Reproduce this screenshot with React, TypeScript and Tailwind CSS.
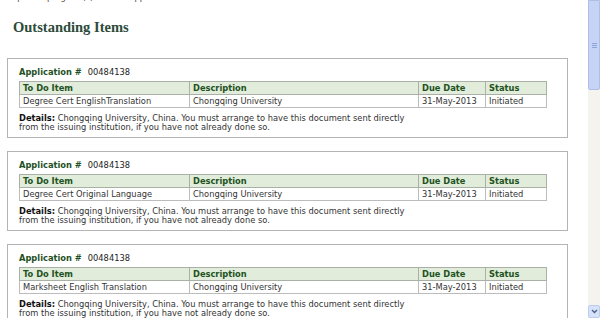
import React from "react";

type Item = { todo: string; description: string; due: string; status: string };

const items: Item[] = [
  { todo: "Degree Cert EnglishTranslation", description: "Chongqing University", due: "31-May-2013", status: "Initiated" },
  { todo: "Degree Cert Original Language", description: "Chongqing University", due: "31-May-2013", status: "Initiated" },
  { todo: "Marksheet English Translation", description: "Chongqing University", due: "31-May-2013", status: "Initiated" },
];

const verdana = "font-['DejaVu_Sans',Verdana,sans-serif]";

function ItemBox({ item }: { item: Item }) {
  return (
    <div className="mt-[13px] ml-[7px] w-[561px] border border-[#b4b4b4] bg-white pt-[7px] pb-[5px] pl-[11px]">
      <div className="flex h-[12px] items-center text-[8.3px] leading-[12px]">
        <span className="font-bold text-[#1f4f1f]">Application #</span>
        <span className="ml-[6px] text-[#222]">00484138</span>
      </div>
      <table className="mt-[3px] w-[528px] border-collapse text-[8.3px] leading-[12px]">
        <thead>
          <tr className="bg-[#e1ecdb]">
            <th className="w-[170px] border border-[#a9b0a6] px-[3px] text-left font-bold text-[#225222]">To Do Item</th>
            <th className="w-[229px] border border-[#a9b0a6] px-[3px] text-left font-bold text-[#225222]">Description</th>
            <th className="w-[67px] border border-[#a9b0a6] px-[3px] text-left font-bold text-[#225222]">Due Date</th>
            <th className="border border-[#a9b0a6] px-[3px] text-left font-bold text-[#225222]">Status</th>
          </tr>
        </thead>
        <tbody>
          <tr>
            <td className="border border-[#bcbcbc] px-[3px] text-[#333]">{item.todo}</td>
            <td className="border border-[#bcbcbc] px-[3px] text-[#333]">{item.description}</td>
            <td className="border border-[#bcbcbc] px-[3px] text-[#333]">{item.due}</td>
            <td className="border border-[#bcbcbc] px-[3px] text-[#333]">{item.status}</td>
          </tr>
        </tbody>
      </table>
      <p className="mt-[6px] text-[8.3px] leading-[9px] text-[#333]">
        <span className="font-bold text-[#111]">Details:</span> Chongqing University, China. You must arrange to have this document sent directly
        <br />
        from the issuing institution, if you have not already done so.
      </p>
    </div>
  );
}

function Scrollbar() {
  return (
    <div className="flex h-full w-[12px] flex-col bg-[#f5f3ed]">
      <div className="flex h-[90px] items-center justify-center rounded-b-[2px] border border-[#aebfe6] bg-[#c5d3f6]">
        <div className="flex flex-col gap-[1px]">
          <div className="h-[1px] w-[5px] bg-[#8ea3d6]" />
          <div className="h-[1px] w-[5px] bg-[#8ea3d6]" />
          <div className="h-[1px] w-[5px] bg-[#8ea3d6]" />
        </div>
      </div>
      <div className="flex-1" />
      <div className="flex h-[13px] items-center justify-center rounded-[2px] border border-[#bccbee] bg-[#d6e1fa]">
        <svg width="7" height="5" viewBox="0 0 7 5">
          <path d="M1 1 L3.5 3.5 L6 1" fill="none" stroke="#4d6185" strokeWidth="1.4" />
        </svg>
      </div>
    </div>
  );
}

export default function App() {
  return (
    <div className={`flex h-[318px] w-[600px] overflow-hidden bg-white ${verdana}`}>
      <div className="flex-1 overflow-hidden">
        <p className="-mt-[8px] pl-[13px] text-[8.3px] leading-[10px] text-[#444]">specific program(s) for that application.</p>
        <h2 className="mt-[16px] pl-[13px] font-['Liberation_Serif',serif] text-[14.5px] leading-[18px] font-bold text-[#2c4b3a]">
          Outstanding Items
        </h2>
        <div className="mt-[22px]">
          {items.map((item, i) => (
            <ItemBox key={i} item={item} />
          ))}
        </div>
      </div>
      <Scrollbar />
    </div>
  );
}
